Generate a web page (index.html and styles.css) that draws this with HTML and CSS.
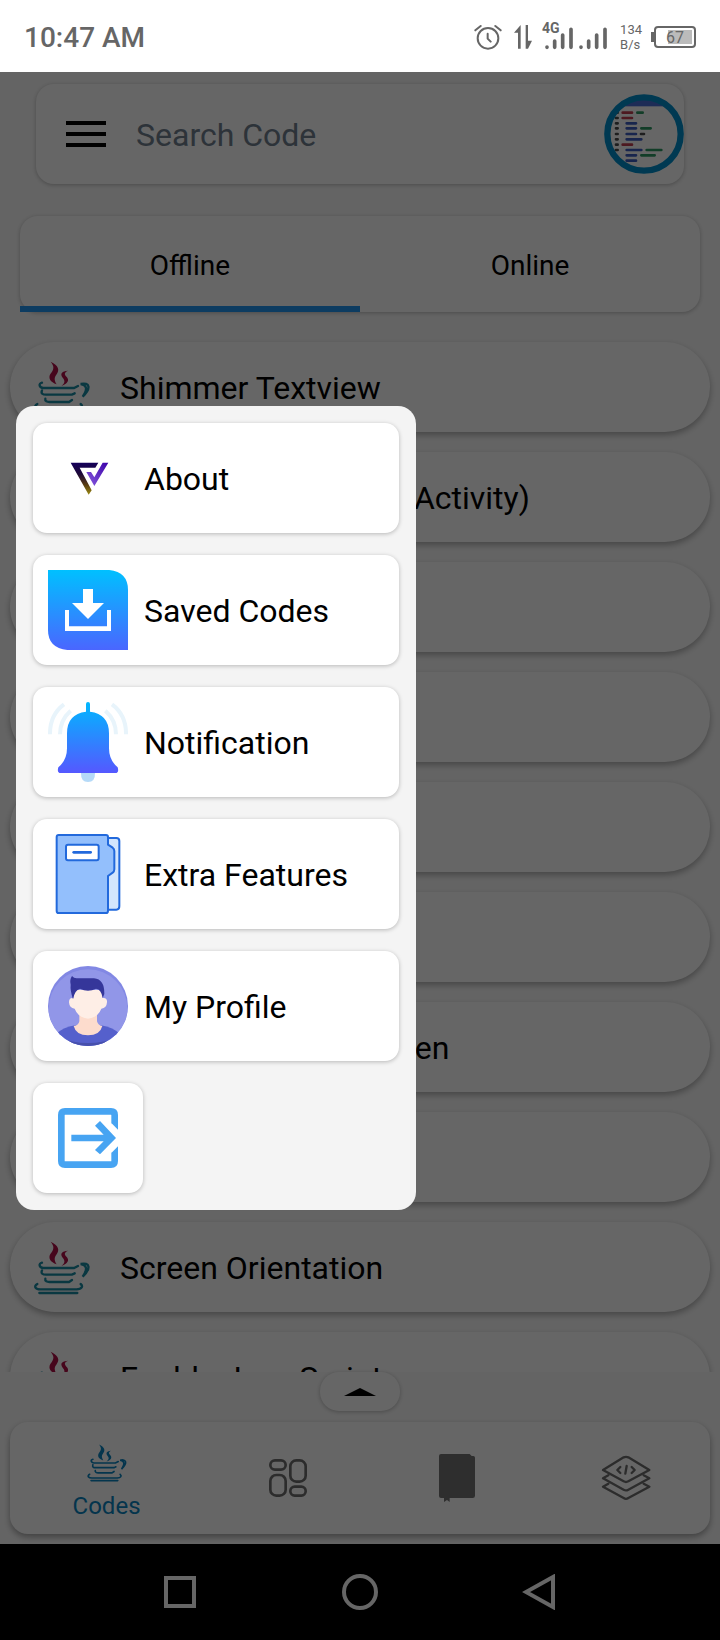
FILE: index.html
```html
<!DOCTYPE html>
<html lang="en">
<head>
    <meta charset="UTF-8">
    <meta name="viewport" content="width=device-width, initial-scale=1.0">
    <title>Search Code</title>
    <link rel="stylesheet" href="styles.css">
</head>
<body>
    <!-- shared icon -->
    <svg class="defs" width="0" height="0">
        <symbol id="java" viewBox="100 90 168 162">
            <g class="steam">
                <path d="M150 92C174 104 178 116 167 131C159 141 162 150 168 160C149 153 142 142 149 129C160 115 162 107 150 92Z"/>
                <path d="M202 119C187 126 193 132 199 139C206 148 202 158 182 165C193 156 194 149 186 140C177 128 184 120 202 119Z"/>
            </g>
            <g class="cup">
                <path d="M124 155C112 158 116 170 128 171H220L232 165"/>
                <path d="M240 159C268 153 272 172 246 197C262 174 258 162 240 159Z"/>
                <path d="M124 178C120 188 126 191 136 191H214L222 187"/>
                <path d="M134 203C132 211 140 213 146 213H205L214 207"/>
                <path d="M110 219C98 226 104 235 120 235H228C244 234 248 226 240 219"/>
                <path d="M116 246H230"/>
            </g>
        </symbol>
    </svg>

    <div class="status-bar">
        <span class="time">10:47 AM</span>
        <div class="status-icons">
            <svg width="28" height="26" viewBox="102 68 84 78">
                <g fill="none" stroke="#666" stroke-width="6" stroke-linecap="round">
                    <circle cx="144" cy="111" r="31"/>
                    <path d="M143 97V112L152 121M106 87L122 74M182 87L166 74"/>
                </g>
            </svg>
            <svg width="18" height="26" viewBox="222 72 54 78">
                <path d="M242 75V146H234V98H222ZM257 75H264V122H276L264 146H257Z" fill="#666"/>
            </svg>
            <div class="signal">
                <span class="network">4G</span>
                <svg width="64" height="26" viewBox="306 68 192 78">
                    <g fill="none" stroke="#666" stroke-width="11" stroke-linecap="round">
                        <path d="M315 137V138M338 119V138M362 101V138M387 84V138M417 137V138M440 119V138M464 101V138M489 84V138"/>
                    </g>
                </svg>
            </div>
            <div class="speed"><span>134</span><span>B/s</span></div>
            <div class="battery"><span>67</span></div>
        </div>
    </div>

    <div class="app">
        <header class="header">
            <div class="search-card">
                <button class="menu-button" aria-label="Menu"><i></i><i></i><i></i></button>
                <input type="text" placeholder="Search Code" aria-label="Search Code">
                <svg class="logo" viewBox="0 0 240 240">
                    <clipPath id="logo-clip"><circle cx="120" cy="120" r="104"/></clipPath>
                    <g clip-path="url(#logo-clip)">
                        <rect width="240" height="37" fill="#4a6fd8"/>
                        <g fill="none" stroke-width="8" stroke-linecap="round">
                            <path stroke="#4d4d4d" d="M36 56H41M36 72H41M36 88H41M36 103H41M36 120H41M36 136H41M36 152H41M36 168H41M111 120H120"/>
                            <path stroke="#c04050" d="M56 56H84M56 72H84M56 152H84"/>
                            <path stroke="#3d5dc0" d="M68 88H96M68 103H96M68 120H96M68 136H112M68 168H112M68 184H96M68 200H96"/>
                            <path stroke="#2f9a64" d="M100 56H116M112 103H140M128 168H172M112 184H152"/>
                        </g>
                    </g>
                    <circle cx="120" cy="120" r="110" fill="none" stroke="#0090cc" stroke-width="19"/>
                </svg>
            </div>
        </header>

        <div class="tabs">
            <button class="tab active">Offline</button>
            <button class="tab">Online</button>
        </div>

        <ul class="code-list">
            <li><svg><use href="#java"/></svg>Shimmer Textview</li>
            <li><svg><use href="#java"/></svg>Animate (Activity To Activity)</li>
            <li><svg><use href="#java"/></svg></li>
            <li><svg><use href="#java"/></svg></li>
            <li><svg><use href="#java"/></svg></li>
            <li><svg><use href="#java"/></svg></li>
            <li><svg><use href="#java"/></svg>Animate Splash Screen</li>
            <li><svg><use href="#java"/></svg></li>
            <li><svg><use href="#java"/></svg>Screen Orientation</li>
            <li><svg><use href="#java"/></svg>Enable Java Script</li>
        </ul>

        <div class="expand">
            <button aria-label="Expand">
                <svg width="32" height="8" viewBox="0 0 32 8"><path d="M0 8L16 0L32 8Z"/></svg>
            </button>
        </div>

        <nav class="bottom-nav">
            <a href="#" class="active">
                <svg width="40" height="38"><use href="#java"/></svg>
                <span>Codes</span>
            </a>
            <a href="#" aria-label="Components">
                <svg width="38" height="38" viewBox="807 180 114 114">
                    <g fill="none" stroke="#6e6e6e" stroke-width="8">
                        <rect x="811" y="184" width="46" height="28" rx="14"/>
                        <rect x="871" y="184" width="46" height="64" rx="18"/>
                        <rect x="811" y="228" width="46" height="62" rx="18"/>
                        <rect x="871" y="263" width="46" height="27" rx="13"/>
                    </g>
                </svg>
            </a>
            <a href="#" aria-label="Books">
                <svg width="36" height="48" viewBox="234 162 108 144">
                    <path fill="#747474" d="M240 162H326L332 168H337Q342 168 342 173V287Q342 294 335 294H266V306L258 300L249 306V294H240Q234 294 234 288V168Q234 162 240 162Z"/>
                </svg>
            </a>
            <a href="#" aria-label="Projects">
                <svg width="50" height="46" viewBox="720 164 150 138">
                    <g fill="none" stroke="#6e6e6e" stroke-width="7" stroke-linejoin="round" stroke-linecap="round">
                        <path d="M788 171Q795 168 802 171L865 209L802 243Q795 247 788 243L726 209Z"/>
                        <path d="M742 225L726 234L788 268Q795 272 802 268L865 234L848 225"/>
                        <path d="M742 250L726 259L788 293Q795 298 802 293L865 259L848 250"/>
                        <path d="M778 200L769 209L778 218M812 200L821 209L812 218M797 197L793 220"/>
                    </g>
                </svg>
            </a>
        </nav>

        <div class="overlay">
            <nav class="menu">
                <a href="#" class="menu-item">
                    <svg viewBox="144 118 240 240">
                        <defs>
                            <linearGradient id="v1" x1="0" y1="0" x2="0" y2="1">
                                <stop offset="0" stop-color="#14005a"/>
                                <stop offset="0.35" stop-color="#1c0838"/>
                                <stop offset="0.7" stop-color="#5a3d10"/>
                                <stop offset="1" stop-color="#9c8c14"/>
                            </linearGradient>
                            <linearGradient id="v2" x1="1" y1="0" x2="0" y2="1">
                                <stop offset="0" stop-color="#3a00a8"/>
                                <stop offset="1" stop-color="#8a5ce0"/>
                            </linearGradient>
                        </defs>
                        <path fill="url(#v1)" d="M212 192H295L286 207H239L275 275L266 288Z"/>
                        <path fill="url(#v2)" d="M308 192H325L283 262L259 220H273L283 236Z"/>
                    </svg>
                    <span>About</span>
                </a>
                <a href="#" class="menu-item">
                    <svg viewBox="144 510 240 240">
                        <defs>
                            <linearGradient id="blue" x1="0" y1="0" x2="0" y2="1">
                                <stop offset="0" stop-color="#00c0ff"/>
                                <stop offset="1" stop-color="#4a66ff"/>
                            </linearGradient>
                        </defs>
                        <path fill="url(#blue)" d="M144 510H328Q384 516 384 570V750H202Q144 744 144 690Z"/>
                        <path fill="#fff" d="M249 567H279V609H312L264 657L216 609H249ZM195 630H207V679H321V630H333V693H195Z"/>
                    </svg>
                    <span>Saved Codes</span>
                </a>
                <a href="#" class="menu-item">
                    <svg viewBox="144 96 240 240">
                        <defs>
                            <linearGradient id="bell" x1="0" y1="0" x2="0" y2="1">
                                <stop offset="0" stop-color="#00b8ff"/>
                                <stop offset="1" stop-color="#5558ff"/>
                            </linearGradient>
                        </defs>
                        <g fill="none" stroke="#e8f4fb" stroke-width="12">
                            <path d="M150 193Q149 135 192 103M180 193Q180 150 212 122M378 193Q379 135 336 103M348 193Q348 150 316 122"/>
                        </g>
                        <path fill="#b5daf8" d="M243 308H285Q286 336 264 336Q242 336 243 308Z"/>
                        <path fill="url(#bell)" d="M258 102Q258 96 264 96Q270 96 270 102V125Q327 132 327 190V235Q327 270 353 292Q358 309 346 309H182Q170 309 175 292Q201 270 201 235V190Q201 132 258 125Z"/>
                    </svg>
                    <span>Notification</span>
                </a>
                <a href="#" class="menu-item">
                    <svg viewBox="144 492 240 240">
                        <g stroke="#2269dc" stroke-width="6" stroke-linejoin="round" stroke-linecap="round">
                            <path fill="#d3e6fd" d="M322 504H349Q358 504 358 513V709Q358 719 349 719H322Z"/>
                            <path fill="#93bffc" d="M176 495H318Q324 495 324 501V524L338 533Q343 537 343 543V598Q343 604 338 608L324 618V722Q324 729 318 729H176Q170 729 170 722V501Q170 495 176 495Z"/>
                            <rect x="198" y="524" width="98" height="47" rx="6" fill="#fff"/>
                            <path stroke-width="8" d="M221 547H272"/>
                        </g>
                    </svg>
                    <span>Extra Features</span>
                </a>
                <a href="#" class="menu-item">
                    <svg viewBox="144 78 240 240">
                        <clipPath id="face"><circle cx="264" cy="198" r="120"/></clipPath>
                        <g clip-path="url(#face)">
                            <rect x="144" y="78" width="240" height="240" fill="#8288e4"/>
                            <circle cx="264" cy="206" r="118" fill="#9196e8"/>
                            <path fill="#5560cc" d="M166 284Q188 262 226 256H302Q340 262 362 284V318H166Z"/>
                            <path fill="#4750ac" d="M170 290Q264 328 358 290V330H170Z"/>
                            <path fill="#fddccd" d="M238 220H291V244Q294 256 307 258Q300 286 264 286Q228 286 221 258Q236 256 238 244Z"/>
                            <path fill="#feeee6" d="M220 150H308V174Q322 172 321 187Q320 204 304 206Q294 232 264 236Q234 232 224 206Q208 204 207 187Q207 172 220 174Z"/>
                            <path fill="#35369a" d="M216 108Q222 116 232 115H282Q314 118 313 162L308 174Q304 148 288 146Q264 158 240 146Q224 150 219 178Q210 150 212 134Q208 120 216 108Z"/>
                        </g>
                    </svg>
                    <span>My Profile</span>
                </a>
                <a href="#" class="menu-item exit" aria-label="Exit">
                    <svg viewBox="144 474 240 240">
                        <path fill="none" stroke="#47a4f2" stroke-width="20" d="M344 550V525Q344 514 333 514H195Q184 514 184 525V663Q184 674 195 674H333Q344 674 344 663V638"/>
                        <path fill="#47a4f2" d="M334 549H354V569ZM334 639H354V619ZM214 584H311L285 557L300 543L348 594L300 643L285 630L311 604H214Z"/>
                    </svg>
                </a>
            </nav>
        </div>
    </div>

    <div class="system-nav">
        <button aria-label="Recent apps"><svg width="36" height="36" viewBox="0 0 36 36"><path d="M4 4H32V32H4Z"/></svg></button>
        <button aria-label="Home"><svg width="36" height="36" viewBox="0 0 36 36"><circle cx="18" cy="18" r="16"/></svg></button>
        <button aria-label="Back"><svg width="36" height="36" viewBox="0 0 36 36"><path d="M31 3V33L4 18Z"/></svg></button>
    </div>
</body>
</html>
```

FILE: styles.css
```css
* {
    box-sizing: border-box;
}

body {
    display: flex;
    flex-direction: column;
    height: 100vh;
    margin: 0;
    font-family: Roboto, sans-serif;
    font-size: 32px;
    color: #000;
    background-color: #fafafa;
}

button {
    padding: 0;
    border: none;
    background: none;
    font: inherit;
    color: inherit;
    cursor: pointer;
}

a {
    color: inherit;
    text-decoration: none;
}

.defs {
    position: absolute;
}

/* status bar */
.status-bar {
    display: flex;
    align-items: center;
    justify-content: space-between;
    height: 72px;
    padding: 2px 24px 0;
    background-color: #fff;
    color: #666;
}

.time {
    font-size: 28px;
    font-weight: 500;
}

.status-icons {
    display: flex;
    align-items: center;
    gap: 12px;
}

.signal {
    position: relative;
    height: 26px;
}

.signal svg {
    display: block;
}

.network {
    position: absolute;
    top: -4px;
    left: -2px;
    font-size: 14px;
    font-weight: 700;
    line-height: 16px;
}

.speed {
    display: flex;
    flex-direction: column;
    font-size: 13px;
    line-height: 15px;
}

.battery {
    position: relative;
    width: 42px;
    height: 22px;
    padding: 2px;
    border: 2px solid #666;
    border-radius: 4px;
    font-size: 16px;
    line-height: 15px;
    text-align: center;
    background: linear-gradient(#bbb, #bbb) no-repeat right 2px center / 24px 14px;
}

.battery::before {
    content: "";
    position: absolute;
    left: -5px;
    top: 4px;
    width: 3px;
    height: 10px;
    background-color: #666;
}

/* app */
.app {
    position: relative;
    display: flex;
    flex-direction: column;
    flex: 1;
    min-height: 0;
}

.header {
    padding: 12px 36px 14px;
}

.search-card {
    display: flex;
    align-items: center;
    height: 100px;
    padding-left: 30px;
    border-radius: 18px;
    background-color: #fff;
    box-shadow: 0 1px 4px rgba(0, 0, 0, 0.25);
}

.menu-button {
    display: flex;
    flex-direction: column;
    gap: 7px;
    width: 40px;
}

.menu-button i {
    height: 4px;
    background-color: #000;
}

.search-card input {
    flex: 1;
    min-width: 0;
    margin: 0 16px 0 30px;
    padding: 2px 0 0;
    border: none;
    outline: none;
    background: none;
    font: inherit;
}

.search-card input::placeholder {
    color: #708090;
    opacity: 1;
}

.logo {
    width: 80px;
    height: 80px;
}

.tabs {
    display: flex;
    height: 96px;
    margin: 18px 20px 0;
    border-radius: 18px;
    background-color: #fff;
    box-shadow: 0 1px 4px rgba(0, 0, 0, 0.25);
}

.tab {
    flex: 1;
    border-top: 8px solid transparent;
    border-bottom: 6px solid transparent;
    font-size: 28px;
}

.tab.active {
    border-top: none;
    border-bottom-color: #2196f3;
    padding-top: 8px;
}

.code-list {
    flex: 1;
    min-height: 0;
    margin: 0;
    padding: 30px 10px 0;
    overflow: hidden;
    list-style: none;
}

.code-list li {
    display: flex;
    align-items: center;
    gap: 30px;
    height: 90px;
    margin-bottom: 20px;
    padding: 2px 24px 0;
    border-radius: 45px;
    background-color: #fff;
    box-shadow: 0 3px 6px rgba(0, 0, 0, 0.3);
}

.code-list svg {
    width: 56px;
    height: 54px;
}

.steam {
    fill: var(--steam, #b01048);
}

.cup {
    fill: none;
    stroke: var(--cup, #1a8ca4);
    stroke-width: 7;
    stroke-linecap: round;
}

.expand {
    display: flex;
    justify-content: center;
    height: 50px;
}

.expand button {
    display: flex;
    align-items: center;
    justify-content: center;
    width: 80px;
    height: 39px;
    border-radius: 19px;
    background-color: #fff;
    box-shadow: 0 1px 4px rgba(0, 0, 0, 0.25);
}

.bottom-nav {
    display: grid;
    grid-template-columns: 192fr 168fr 168fr 168fr;
    height: 112px;
    margin: 0 10px 10px;
    border-radius: 18px;
    background-color: #fff;
    box-shadow: 0 3px 6px rgba(0, 0, 0, 0.35);
}

.bottom-nav a {
    display: flex;
    flex-direction: column;
    align-items: center;
    justify-content: center;
    gap: 10px;
    font-size: 24px;
    line-height: 28px;
}

.bottom-nav .active {
    --steam: #0a84c0;
    --cup: #0a84c0;
    padding-top: 8px;
    color: #0a84c0;
}

/* side menu over the page */
.overlay {
    position: absolute;
    inset: 0;
    display: flex;
    align-items: center;
    padding: 0 16px;
    background-color: rgba(0, 0, 0, 0.6);
}

.menu {
    display: flex;
    flex-direction: column;
    gap: 22px;
    width: 400px;
    padding: 17px;
    border-radius: 18px;
    background-color: #f4f4f4;
}

.menu-item {
    display: flex;
    align-items: center;
    gap: 16px;
    padding: 15px;
    border-radius: 14px;
    background-color: #fff;
    box-shadow: 0 1px 4px rgba(0, 0, 0, 0.25);
}

.menu-item svg {
    width: 80px;
    height: 80px;
}

.menu-item span {
    padding-top: 2px;
}

.menu-item.exit {
    align-self: flex-start;
}

/* android buttons */
.system-nav {
    display: flex;
    align-items: center;
    justify-content: center;
    gap: 144px;
    height: 96px;
    background-color: #000;
}

.system-nav svg {
    display: block;
    fill: none;
    stroke: #666;
    stroke-width: 4;
}
```
